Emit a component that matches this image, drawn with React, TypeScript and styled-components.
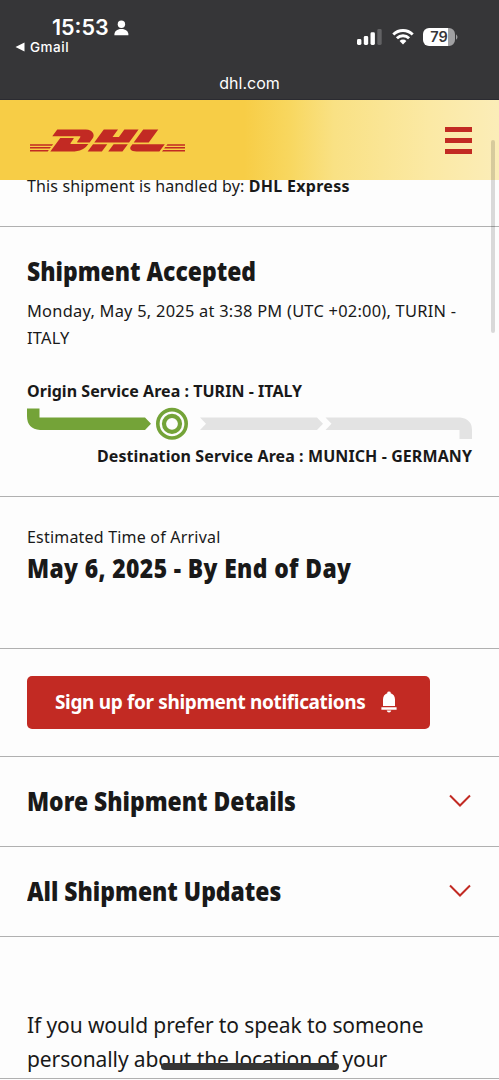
import React from "react";
import styled, { createGlobalStyle } from "styled-components";
import { SiDhl } from "react-icons/si";

const RED = "#c22a23";
const GREEN = "#74a338";
const GREY = "#e3e3e3";

const Global = createGlobalStyle`
  * { box-sizing: border-box; }
  body { margin: 0; background: #fdfdfd; }
`;

const Screen = styled.div`
  position: relative;
  display: flex;
  flex-direction: column;
  width: 499px;
  height: 1080px;
  overflow: hidden;
  background: #fdfdfd;
  color: #191919;
  font-family: "Noto Sans", sans-serif;
`;

const BrowserTop = styled.div`
  flex: none;
  height: 100px;
  background: #363638;
  color: #fff;
  font-family: Inter, sans-serif;
  border-bottom: 1px solid #2b2b31;
`;

const StatusBar = styled.div`
  display: flex;
  justify-content: space-between;
  height: 72px;
  padding: 15px 40px 0 15px;
`;

const ClockRow = styled.div`
  display: flex;
  align-items: center;
  gap: 5px;
  height: 25px;
  padding-left: 37px;
`;

const Clock = styled.span`
  font-size: 21.5px;
  font-weight: 600;
  line-height: 25px;
`;

const BackLink = styled.div`
  display: flex;
  align-items: center;
  gap: 5px;
  height: 13px;
  font-size: 13.5px;
  font-weight: 500;
  letter-spacing: 0.5px;
`;

const Indicators = styled.div`
  display: flex;
  align-items: flex-start;
  gap: 9px;
  padding-top: 13px;
`;

const Address = styled.div`
  line-height: 22px;
  font-size: 16px;
  text-align: center;
`;

const Header = styled.header`
  position: relative;
  z-index: 1;
  flex: none;
  display: flex;
  align-items: center;
  justify-content: space-between;
  height: 80px;
  padding: 0 27px 0 30px;
  background: linear-gradient(90deg, #f7cd46 0%, #f7cd46 49%, #f8d75f 58%, #f9e184 67%, #fbe9a4 86%, #fbedb8 100%);
`;

const Logo = styled(SiDhl)`
  display: block;
  width: 155px;
  height: 155px;
  color: ${RED};
`;

const MenuButton = styled.div`
  display: flex;
  flex-direction: column;
  gap: 6px;
  width: 27px;
`;

const MenuBar = styled.span`
  height: 5px;
  background: ${RED};
`;

const Section = styled.section<{ $height: number; $top?: number }>`
  flex: none;
  height: ${(p) => p.$height}px;
  padding: ${(p) => p.$top ?? 0}px 27px 0;
  border-bottom: 1px solid #b0b0b0;
`;

const Line = styled.p<{
  $size?: number;
  $track?: number;
  $leading?: number;
  $gap?: number;
  $bold?: boolean;
  $end?: boolean;
}>`
  margin: ${(p) => p.$gap ?? 0}px 0 0;
  font-size: ${(p) => p.$size ?? 16}px;
  line-height: ${(p) => p.$leading ?? 26}px;
  letter-spacing: ${(p) => p.$track ?? 0}px;
  font-weight: ${(p) => (p.$bold ? 700 : 400)};
  text-align: ${(p) => (p.$end ? "right" : "left")};
  white-space: nowrap;
`;

const Strong = styled.strong`
  font-weight: 700;
  letter-spacing: 0.3px;
`;

const Title = styled.h2<{ $track?: number }>`
  margin: 0;
  font-size: 26px;
  font-weight: 900;
  line-height: 36px;
  letter-spacing: ${(p) => p.$track ?? 0}px;
  white-space: nowrap;
  transform: scaleX(0.88);
  transform-origin: left center;
`;

const Track = styled.svg`
  display: block;
  margin-top: 2px;
`;

const Notify = styled.button`
  display: flex;
  align-items: center;
  gap: 15px;
  width: 403px;
  height: 53px;
  padding: 0 0 1px 28px;
  border: 0;
  border-radius: 5px;
  background: ${RED};
  color: #fff;
  font-family: inherit;
  font-size: 19px;
  font-weight: 700;
  letter-spacing: -0.35px;
  white-space: nowrap;
`;

const Accordion = styled(Section)`
  display: flex;
  align-items: center;
  justify-content: space-between;
  padding: 0 28px 1px 27px;
`;

const ScrollThumb = styled.div`
  position: absolute;
  z-index: 2;
  top: 140px;
  right: 4px;
  width: 4px;
  height: 193px;
  border-radius: 2px;
  background: rgba(0, 0, 0, 0.14);
`;

const HomeIndicator = styled.div`
  position: absolute;
  left: 161px;
  bottom: 10px;
  width: 178px;
  height: 7px;
  border-radius: 4px;
  background: #363636;
`;

const Chevron = () => (
  <svg width="22" height="14" viewBox="0 0 22 14" fill="none" stroke={RED} strokeWidth="2">
    <path d="M1 1.5 11 11.5 21 1.5" />
  </svg>
);

const PersonIcon = () => (
  <svg width="15" height="16" viewBox="0 0 15 16" fill="#fff">
    <circle cx="7.4" cy="4.2" r="3.7" />
    <path d="M.4 15.3c-.3-3.8 2.6-6.2 7-6.2s7.300 2.400 7 6.200z" />
  </svg>
);

const SignalIcon = () => (
  <svg width="26" height="17" viewBox="0 0 26 17" fill="#fff">
    <rect x="0" y="11" width="4.400" height="6" rx="1.400" />
    <rect x="6.800" y="8" width="4.400" height="9" rx="1.400" />
    <rect x="13.500" y="4.300" width="4.400" height="12.700" rx="1.400" />
    <rect x="20.300" y="1" width="4.400" height="16" rx="1.400" fill="#626264" />
  </svg>
);

const WifiIcon = () => (
  <svg width="22" height="17" viewBox="0 0 22 17" fill="none" stroke="#fff" strokeWidth="2.900">
    <path d="M1.300 6.500a13.900 13.900 0 0 1 19.400 0" />
    <path d="M4.900 10.300a8.700 8.700 0 0 1 12.200 0" />
    <path d="M11 16.500 7.600 13a4.800 4.800 0 0 1 6.800 0z" fill="#fff" stroke="none" />
  </svg>
);

const BatteryIcon = () => (
  <svg width="36" height="18" viewBox="0 0 36 18">
    <path d="M6 0H25V18H6a6 6 0 0 1-6-6V6a6 6 0 0 1 6-6z" fill="#fff" />
    <path d="M25 0h1a6 6 0 0 1 6 6v6a6 6 0 0 1-6 6h-1zM33 6.200q3 2.800 0 5.600z" fill="#a0a0a2" />
    <text x="16" y="14.200" textAnchor="middle" fontFamily="Inter, sans-serif" fontSize="14.500" fontWeight="600" fill="#363638">79</text>
  </svg>
);

const BellIcon = () => (
  <svg width="16" height="22" viewBox="0 0 16 22" fill="#fff">
    <path d="M6.300 2.200V1.500Q6.300.5 8 .5t1.700 1v.7Q14 3.800 14 8.500V15H2V8.500Q2 3.800 6.300 2.200z" />
    <path d="M.4 16.200h15.200v2.500H.4zM5.700 19.500h4.600Q9.800 21.500 8 21.500t-2.300-2z" />
  </svg>
);

export default function App() {
  return (
    <Screen>
      <Global />
      <BrowserTop>
        <StatusBar>
          <div>
            <ClockRow><Clock>15:53</Clock><PersonIcon /></ClockRow>
            <BackLink>
              <svg width="10" height="10" viewBox="0 0 10 10" fill="#fff"><path d="M.5 5 9.500.5v9z" /></svg>
              Gmail
            </BackLink>
          </div>
          <Indicators>
            <SignalIcon />
            <WifiIcon />
            <BatteryIcon />
          </Indicators>
        </StatusBar>
        <Address>dhl.com</Address>
      </BrowserTop>
      <Header>
        <Logo />
        <MenuButton><MenuBar /><MenuBar /><MenuBar /></MenuButton>
      </Header>
      <Section $height={47}>
        <Line $gap={-7} $track={0.13}>This shipment is handled by: <Strong>DHL Express</Strong></Line>
      </Section>
      <Section $height={270} $top={26}>
        <Title>Shipment Accepted</Title>
        <Line $size={16.4} $leading={27} $gap={8} $track={0.25}>Monday, May 5, 2025 at 3:38 PM (UTC +02:00), TURIN -<br />ITALY</Line>
        <Line $bold $gap={27} $track={0.04}>Origin Service Area : TURIN - ITALY</Line>
        <Track width="446" height="35" viewBox="0 0 446 35">
          <path d="M0 2.500H12.500V11.500H118L124 17.800 118 24H13Q0 23 0 10z" fill={GREEN} />
          <circle cx="145" cy="17.800" r="14.200" fill="none" stroke={GREEN} strokeWidth="3.600" />
          <circle cx="145" cy="17.800" r="8" fill="none" stroke={GREEN} strokeWidth="4.200" />
          <path d="M173 11.500H290L296 17.800 290 24H173L179 17.800zM298.500 11.500H433Q445 13 445 24V33H432.500V24H298.500L304.500 17.800z" fill={GREY} />
        </Track>
        <Line $bold $end $gap={2} $track={0.09}>Destination Service Area : MUNICH - GERMANY</Line>
      </Section>
      <Section $height={152} $top={27}>
        <Line $track={0.2}>Estimated Time of Arrival</Line>
        <Title $track={0.42}>May 6, 2025 - By End of Day</Title>
      </Section>
      <Section $height={108} $top={27}>
        <Notify>Sign up for shipment notifications<BellIcon /></Notify>
      </Section>
      <Accordion $height={90}><Title>More Shipment Details</Title><Chevron /></Accordion>
      <Accordion $height={90}><Title>All Shipment Updates</Title><Chevron /></Accordion>
      <Section $height={142} $top={71}>
        <Line $size={21} $leading={34} $track={-0.1}>If you would prefer to speak to someone<br />personally about the location of your</Line>
      </Section>
      <ScrollThumb />
      <HomeIndicator />
    </Screen>
  );
}
